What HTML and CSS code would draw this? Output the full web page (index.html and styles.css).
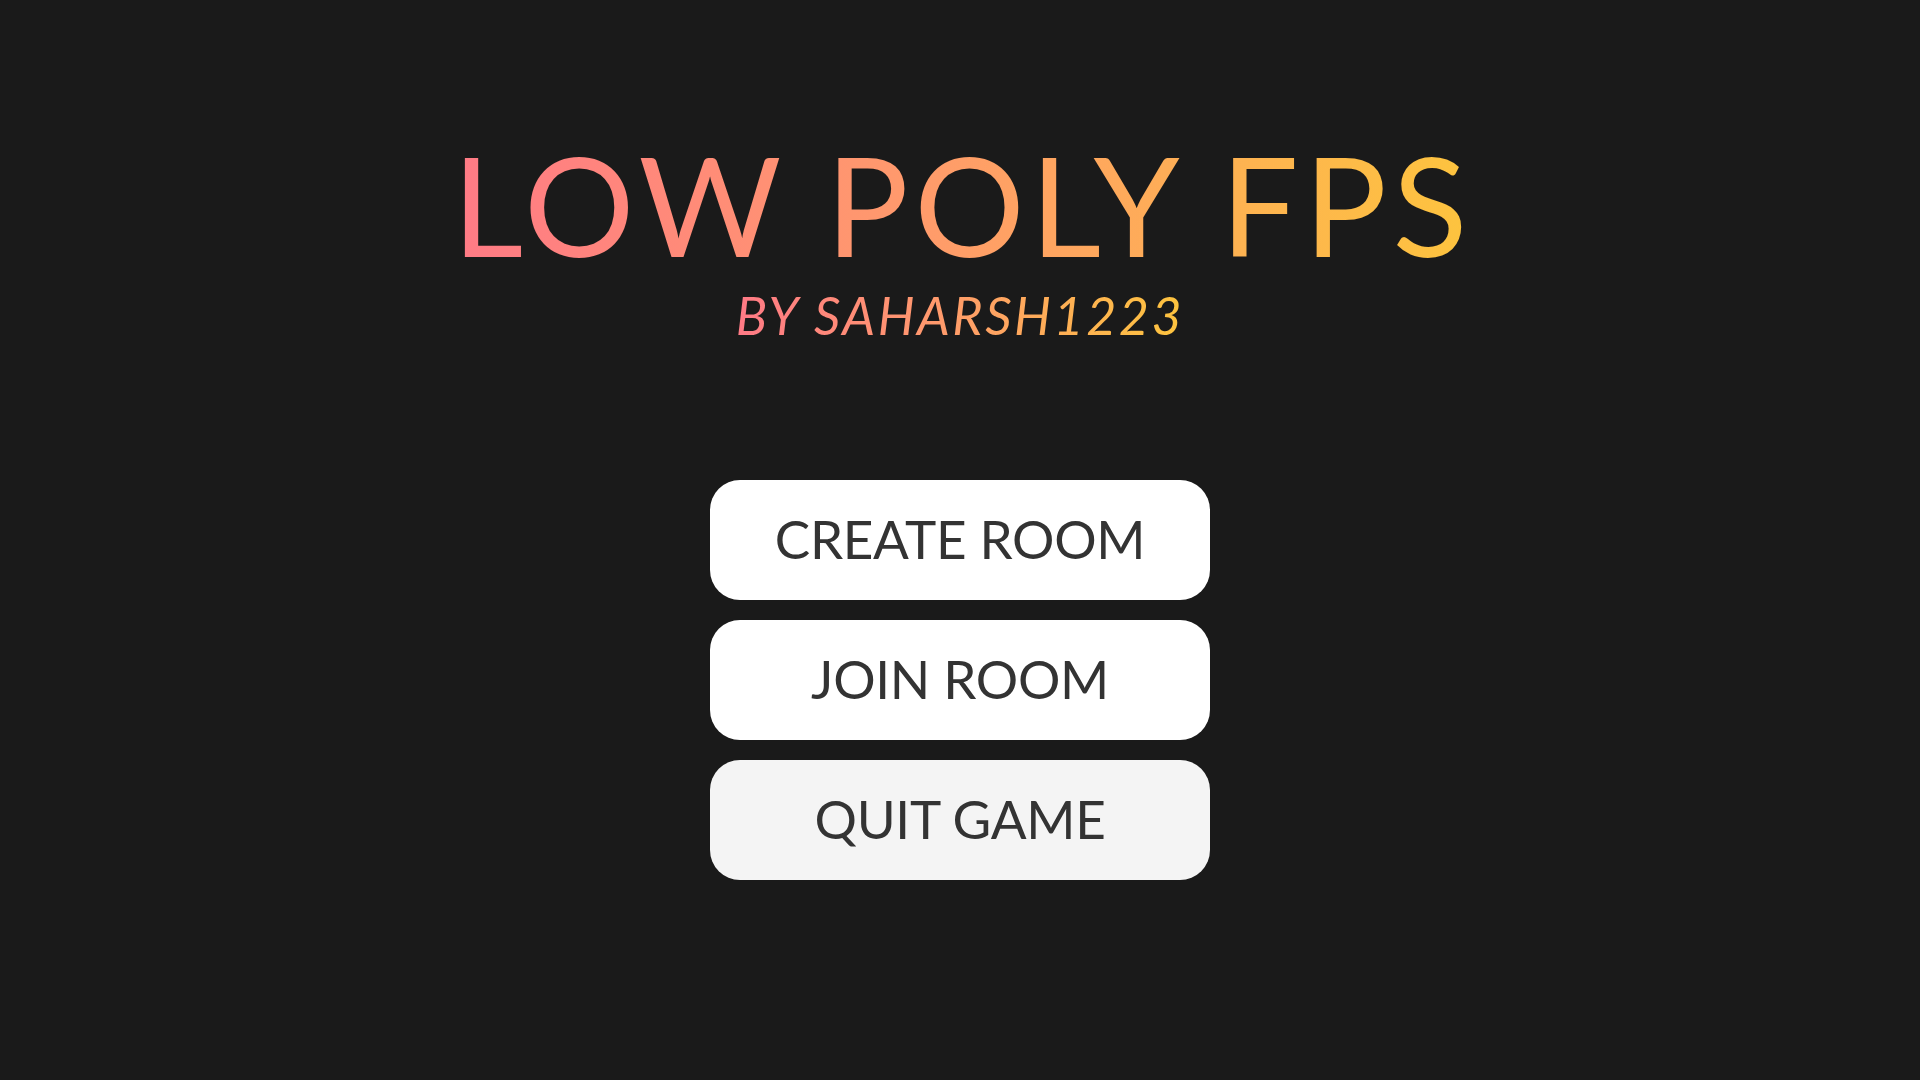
FILE: index.html
```html
<!DOCTYPE html>
<html lang="en">
<head>
<meta charset="utf-8">
<title>Low Poly FPS</title>
<link rel="stylesheet" href="styles.css">
</head>
<body>
<main class="menu">
  <header class="heading">
    <h1 class="title">LOW POLY FPS</h1>
    <p class="subtitle">BY SAHARSH1223</p>
  </header>
  <nav class="buttons">
    <button class="btn">CREATE ROOM</button>
    <button class="btn">JOIN ROOM</button>
    <button class="btn btn-quit">QUIT GAME</button>
  </nav>
</main>
</body>
</html>
```
FILE: styles.css
```css
html, body {
  margin: 0;
  padding: 0;
  height: 100%;
  background: #1a1a1a;
}
body {
  font-family: "Lato", "Noto Sans", sans-serif;
}
.menu {
  display: flex;
  flex-direction: column;
  align-items: center;
  padding-top: 135px;
}
.heading {
  display: flex;
  flex-direction: column;
  align-items: center;
}
.title {
  margin: 0;
  font-size: 138px;
  font-weight: 400;
  line-height: 1;
  letter-spacing: 5.5px;
  background: linear-gradient(90deg, #ff7a86 0%, #ff9a6c 45%, #fdc43e 100%);
  -webkit-background-clip: text;
  background-clip: text;
  color: transparent;
  padding-left: 5px;
}
.subtitle {
  margin: 16px 0 0 0;
  font-size: 52px;
  font-style: italic;
  font-weight: 400;
  line-height: 1;
  letter-spacing: 2.5px;
  background: linear-gradient(90deg, #ff7a86 0%, #ff9a6c 45%, #fdc43e 100%);
  -webkit-background-clip: text;
  background-clip: text;
  color: transparent;
}
.buttons {
  margin-top: 139px;
  display: flex;
  flex-direction: column;
  gap: 20px;
}
.btn {
  width: 500px;
  height: 120px;
  border: none;
  border-radius: 30px;
  background: #ffffff;
  color: #333333;
  font-family: "Lato", "Noto Sans", sans-serif;
  font-size: 53px;
  font-weight: 400;
  line-height: 1;
  letter-spacing: -0.3px;
  display: flex;
  align-items: center;
  justify-content: center;
  padding: 0 0 4px 0;
}
.btn-quit {
  background: #f4f4f4;
}
```
